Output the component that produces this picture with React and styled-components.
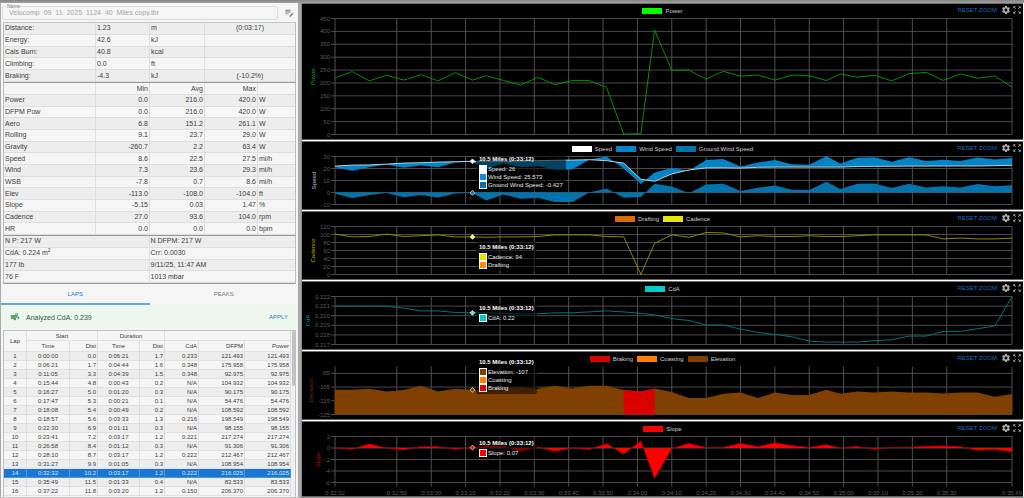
import React, { useLayoutEffect, useRef, useState } from "react";
import styled, { createGlobalStyle } from "styled-components";
import { MdAir, MdEditNote, MdSettings, MdZoomOutMap } from "react-icons/md";

const Global = createGlobalStyle`
  * { box-sizing: border-box; }
  body {
    margin: 0;
    background: #f5f5f5;
    font-family: "Liberation Sans", Arial, sans-serif;
    font-size: 7px;
    color: #3c3c3c;
  }
  button, input { font: inherit; margin: 0; }
`;

/* ---------- data ---------- */

const totals = [
  ["Distance:", "1.23", "m", "(0:03:17)"],
  ["Energy:", "42.6", "kJ", ""],
  ["Cals Burn:", "40.8", "kcal", ""],
  ["Climbing:", "0.0", "ft", ""],
  ["Braking:", "-4.3", "kJ", "(-10.2%)"],
];

const stats = [
  ["Power", "0.0", "216.0", "420.0", "W"],
  ["DFPM Pow", "0.0", "216.0", "420.0", "W"],
  ["Aero", "6.8", "151.2", "261.1", "W"],
  ["Rolling", "9.1", "23.7", "29.0", "W"],
  ["Gravity", "-260.7", "2.2", "63.4", "W"],
  ["Speed", "8.6", "22.5", "27.5", "mi/h"],
  ["Wind", "7.3", "23.6", "29.3", "mi/h"],
  ["WSB", "-7.8", "0.7", "8.6", "mi/h"],
  ["Elev", "-113.0", "-108.0", "-104.0", "ft"],
  ["Slope", "-5.15", "0.03", "1.47", "%"],
  ["Cadence", "27.0", "93.6", "104.0", "rpm"],
  ["HR", "0.0", "0.0", "0.0", "bpm"],
];

const laps = [
  ["1", "0:00:00", "0.0", "0:06:21", "1.7", "0.233", "121.493"],
  ["2", "0:06:21", "1.7", "0:04:44", "1.6", "0.348", "175.958"],
  ["3", "0:11:05", "3.3", "0:04:39", "1.5", "0.348", "92.975"],
  ["4", "0:15:44", "4.8", "0:00:43", "0.2", "N/A", "104.932"],
  ["5", "0:16:27", "5.0", "0:01:20", "0.3", "N/A", "90.175"],
  ["6", "0:17:47", "5.3", "0:00:21", "0.1", "N/A", "54.476"],
  ["7", "0:18:08", "5.4", "0:00:49", "0.2", "N/A", "108.592"],
  ["8", "0:18:57", "5.6", "0:03:33", "1.3", "0.216", "198.549"],
  ["9", "0:22:30", "6.9", "0:01:11", "0.3", "N/A", "98.155"],
  ["10", "0:23:41", "7.2", "0:03:17", "1.2", "0.221", "217.274"],
  ["11", "0:26:58", "8.4", "0:01:12", "0.3", "N/A", "91.306"],
  ["12", "0:28:10", "8.7", "0:03:17", "1.2", "0.222", "212.467"],
  ["13", "0:31:27", "9.9", "0:01:05", "0.3", "N/A", "108.954"],
  ["14", "0:32:32", "10.2", "0:03:17", "1.2", "0.222", "216.025"],
  ["15", "0:35:49", "11.5", "0:01:33", "0.4", "N/A", "83.533"],
  ["16", "0:37:22", "11.8", "0:03:20", "1.2", "0.150", "206.370"],
];

/* Seconds since the start of the lap at which a sample was taken. */
const times = [
  0, 5, 10, 15, 20, 25, 30, 35, 40, 44, 49, 54, 59, 64, 69, 74, 79, 84, 89, 93,
  98, 103, 108, 113, 118, 123, 128, 133, 138, 143, 147, 152, 157, 162, 167, 172,
  177, 182, 187, 192, 197,
];
const DURATION = 197;
const HOVER = 8;

const timeTicks = [
  [0, "0:32:32"], [18, "0:32:50"], [28, "0:33:00"], [38, "0:33:10"], [48, "0:33:20"],
  [58, "0:33:30"], [68, "0:33:40"], [78, "0:33:50"], [88, "0:34:00"], [98, "0:34:10"],
  [108, "0:34:20"], [118, "0:34:30"], [128, "0:34:40"], [138, "0:34:50"],
  [148, "0:35:00"], [158, "0:35:10"], [168, "0:35:20"], [178, "0:35:30"],
  [197, "0:35:49"],
];

const power = [
  219, 244, 208, 230, 211, 232, 208, 240, 211, 228, 210, 192, 222, 193, 209, 209,
  183, 1, 4, 405, 249, 250, 215, 245, 226, 231, 211, 231, 228, 209, 235, 222, 230,
  208, 236, 241, 210, 235, 218, 227, 184,
];
const speed = [
  22, 22.8, 23, 23.7, 24.5, 24.8, 25.3, 25.7, 26, 26, 26, 26.2, 26.5, 26.8, 27,
  27.3, 26.5, 24.5, 11, 9.3, 15.5, 18.8, 20.5, 20.6, 20.3, 21, 21.2, 21.2, 21.2,
  21.2, 21.2, 21.7, 21.8, 21.8, 22, 22, 22.1, 22.1, 22.1, 22.3, 22.7,
];
const groundWind = [
  -1, -4.6, -2, -0.4, -3.9, -2.2, -4.2, -0.8, -0.4, -6.6, -1.6, -5.2, -4.4, -7.8,
  -7.8, 0, 3.4, -4.4, -3.8, 7.3, 5, -0.7, 6.6, 7.3, 1.3, 4, 5.8, 2.3, 2, 9, 3,
  7.3, 7.6, 3.8, 7.3, 4.2, 5.2, 4.2, 7, 5.2, 6,
];
const wind = speed.map((v, i) => v + groundWind[i]);
const cadence = [
  101, 94, 95, 101, 95, 97, 99, 94, 94, 93, 94, 94, 95, 99, 99, 99, 95, 94, 0, 78,
  99, 93, 105, 104, 94, 97, 95, 95, 97, 95, 95, 97, 99, 99, 99, 99, 89, 91, 89, 89,
  91,
];
const cda = [
  0.221, 0.221, 0.221, 0.221, 0.22078, 0.2205, 0.2205, 0.22033, 0.2203, 0.2203,
  0.22025, 0.22018, 0.2202, 0.2203, 0.2203, 0.2204, 0.2205, 0.2204, 0.22025,
  0.22008, 0.2197, 0.2195, 0.21903, 0.21903, 0.2186, 0.21826, 0.21805, 0.2178,
  0.21735, 0.21725, 0.21725, 0.21725, 0.2174, 0.2175, 0.21787, 0.21787, 0.21836,
  0.21836, 0.21865, 0.21893, 0.222,
];
const elevation = [
  -107, -107, -106.2, -108.2, -107.2, -104, -108.2, -106.2, -107, -107, -105.5,
  -105.2, -106.2, -104, -106, -104, -104, -107.2, -108.2, -106, -108.7, -113, -113,
  -109.8, -109, -113, -109, -110.8, -110.8, -107, -109.8, -108.2, -109, -108.2,
  -109, -109, -109.6, -109, -109, -112, -110,
];
const slope = [
  0, -0.2, 0.7, 0, -0.3, 0.2, 0.2, -0.2, 0.07, 0.4, 0.3, -0.6, 0.15, -0.55, 0,
  -0.25, 0.75, -1.05, 1.2, -5.3, -0.1, 0.8, 0.05, 0.1, 0.8, 0.2, 0.9, 0.4, 0.1,
  0.55, 0, 0.25, -0.2, 0.1, 0.1, 0.3, 0.35, 0.2, -0.4, -0.25, -0.65,
];

const charts = [
  {
    title: "Power", color: "#00ad00", max: 450, min: 0, plot: 116, height: 121,
    ticks: ["450", "400", "350", "300", "250", "200", "150", "100", "50", "0"],
    legend: [["Power", "#00ff00"]],
    layers: [{ kind: "line", data: power, color: "#00a000" }],
  },
  {
    title: "Speed", color: "#c4c4c4", max: 30, min: -10, plot: 48, height: 53,
    ticks: ["30", "20", "10", "0", "-10"],
    legend: [["Speed", "#ffffff"], ["Wind Speed", "#0284c7"], ["Ground Wind Speed", "#0274ad"]],
    layers: [
      { kind: "area", data: groundWind, base: 0, color: "#0274ad" },
      { kind: "area", data: wind, baseData: speed, color: "#0284c7" },
      { kind: "line", data: speed, color: "#c9dbe6" },
    ],
    markers: [[speed, "#ffffff"], [groundWind, "#0274ad"]],
    tip: {
      top: 12,
      items: [["Speed: 26", "#ffffff"], ["Wind Speed: 25.573", "#1688d8"], ["Ground Wind Speed: -0.427", "#0a6fb0"]],
    },
  },
  {
    title: "Cadence", color: "#b3b300", max: 120, min: 0, plot: 48, height: 53,
    ticks: ["120", "100", "80", "60", "40", "20", "0"],
    legend: [["Drafting", "#d96c00"], ["Cadence", "#e6e600"]],
    layers: [{ kind: "line", data: cadence, color: "#989800" }],
    markers: [[cadence, "#ffff33"]],
    tip: { top: 30, items: [["Cadence: 94", "#e6e600"], ["Drafting", "#ff8c1a"]] },
  },
  {
    title: "CdA", color: "#009999", max: 0.222, min: 0.217, plot: 48, height: 53,
    ticks: ["0.222", "0.221", "0.220", "0.219", "0.218", "0.217"],
    legend: [["CdA", "#00cccc"]],
    layers: [{ kind: "line", data: cda, color: "#008080" }],
    markers: [[cda, "#66d9e6"]],
    tip: { top: 21, items: [["CdA: 0.22", "#00cccc"]] },
  },
  {
    title: "Elevation", color: "#663300", max: -90, min: -125, plot: 48, height: 53,
    ticks: ["-95", "-105", "-115", "-125"],
    legend: [["Braking", "#d90000"], ["Coasting", "#ff8000"], ["Elevation", "#804000"]],
    layers: [
      { kind: "area", data: elevation, base: -125, color: "#804000" },
      { kind: "area", data: elevation, base: -125, color: "#d90000", from: 17, to: 19 },
    ],
    markers: [[elevation, "#804000"]],
    tip: { top: 5, items: [["Elevation: -107", "#804000"], ["Coasting", "#ff8000"], ["Braking", "#e60000"]] },
  },
  {
    title: "Slope", color: "#c40000", max: 2, min: -6, plot: 46, height: 60, timeAxis: true,
    ticks: ["2", "0", "-2", "-4", "-6"],
    legend: [["Slope", "#ff0000"]],
    layers: [
      { kind: "area", data: slope, base: 0, color: "#ff0000" },
      { kind: "line", data: slope, color: "#a00000" },
    ],
    markers: [[slope, "#ff0000"]],
    tip: { top: 16, items: [["Slope: 0.07", "#ff0000"]] },
  },
];

/* ---------- page ---------- */

const Page = styled.div`
  display: flex;
  flex-direction: column;
  height: 100vh;
  overflow: hidden;
`;

const TopBar = styled.div`
  flex: none;
  height: 3px;
  background: linear-gradient(#858585, #a0a0a0);
`;

const Columns = styled.div`
  flex: 1;
  min-height: 0;
  display: grid;
  grid-template-columns: 301px 1fr;
`;

/* ---------- sidebar ---------- */

const Sidebar = styled.aside`
  display: flex;
  flex-direction: column;
  min-height: 0;
  overflow: hidden;
  border-left: 1px solid #aaa;
  border-right: 3px solid #a8a8a8;
  border-bottom: 1px solid #c4c4c4;
`;

const NameRow = styled.div`
  flex: none;
  display: flex;
  align-items: center;
  gap: 6px;
  height: 19px;
  padding: 0 3px 0 1px;
`;

const NameField = styled.div`
  position: relative;
  flex: 1;

  label {
    position: absolute;
    top: -3px;
    left: 4px;
    padding: 0 1px;
    background: #f5f5f5;
    color: #777;
    font-size: 5px;
    line-height: 6px;
  }
  input {
    display: block;
    width: 100%;
    height: 14px;
    padding: 0 6px;
    border: 1px solid #dcdcdc;
    border-radius: 2px;
    background: transparent;
    color: #a6a6a6;
    line-height: 12px;
  }
`;

const IconButton = styled.button`
  display: flex;
  padding: 0;
  border: 0;
  background: none;
  color: ${(p) => p.$color};
  font-size: ${(p) => p.$size}px;
`;

const StatTable = styled.table`
  flex: none;
  width: 293px;
  height: ${(p) => p.$height}px;
  margin-left: 2px;
  table-layout: fixed;
  border-spacing: 0;
  border: solid #bdbdbd;
  border-width: ${(p) => (p.$open ? "1px 1px 0" : "1px 1px 1px")};
  border-top-color: ${(p) => (p.$strong ? "#999" : "#c4c4c4")};
  border-bottom-color: #999;
  line-height: 8px;

  th, td {
    padding: 0 1px;
    border-right: 1px solid #dedede;
    border-bottom: 1px solid #dedede;
    font-weight: 400;
    text-align: left;
    white-space: nowrap;
  }
  th:last-child, td:last-child { border-right: 0; }
  thead th { height: 12px; }
  tbody tr:nth-child(odd) { background: #ededed; }
  sup { font-size: 5px; line-height: 0; }
`;

const Num = styled.td`
  && { text-align: ${(p) => p.$align || "right"}; }
`;

const Tabs = styled.div`
  flex: none;
  display: grid;
  grid-template-columns: 1fr 1fr;
  height: 21px;
`;

const Tab = styled.button`
  padding: 0;
  border: 0;
  border-bottom: 2px solid ${(p) => (p.$active ? "#64a6e2" : "transparent")};
  background: none;
  color: ${(p) => (p.$active ? "#1976d2" : "#777")};
  font-size: 6px;
`;

const Notice = styled.div`
  flex: none;
  display: flex;
  align-items: center;
  gap: 6px;
  height: 24px;
  margin-bottom: 1px;
  padding: 0 10px 0 9px;
  background: #edf7ed;
  color: #2f5733;

  svg { font-size: 10px; color: #2e8b34; }
  span { flex: 1; }
`;

const TextButton = styled.button`
  padding: 0;
  border: 0;
  background: none;
  color: ${(p) => p.$color};
  font-size: 6px;
  line-height: 8px;
`;

const LapPane = styled.div`
  flex: 1;
  min-height: 0;
  display: flex;
  width: 293px;
  margin-left: 2px;
  overflow: hidden;
  border: 1px solid #c0c0c0;
  border-bottom: 0;
`;

const LapTable = styled.table`
  flex: none;
  align-self: flex-start;
  width: 287px;
  table-layout: fixed;
  border-spacing: 0;
  font-size: 6px;
  line-height: 8px;

  th, td {
    height: 9px;
    padding: 0 1px;
    border-right: 1px solid #dedede;
    border-bottom: 1px solid #e0e0e0;
    font-weight: 400;
    text-align: center;
  }
  th { height: 10px; }
  thead tr:last-child th { height: 11px; }
  tbody tr:nth-child(odd) { background: #ededed; }
`;

const LapRow = styled.tr`
  && { ${(p) => p.$selected && "background: #1976d2; color: #d7e8f8;"} }
  && td { ${(p) => p.$selected && "border-color: #4c94db;"} }
  td:nth-child(3), td:nth-child(n + 5) { text-align: right; }
`;

const RightHead = styled.th`
  && { text-align: right; }
`;

const ScrollTrack = styled.div`
  flex: 1;
  display: flex;
  justify-content: flex-end;
  background: #f0f0f0;
`;

const ScrollThumb = styled.div`
  width: 3px;
  height: 55px;
  border-radius: 2px;
  background: #c1c1c1;
`;

function SidePanel() {
  return (
    <Sidebar>
      <NameRow>
        <NameField>
          <input id="ride-name" readOnly value="Velocomp_09_11_2025_1124_40_Miles copy.ibr" />
          <label htmlFor="ride-name">Name</label>
        </NameField>
        <IconButton $color="#757575" $size={11} aria-label="Edit notes">
          <MdEditNote />
        </IconButton>
      </NameRow>

      <StatTable $height={60} $open>
        <colgroup>
          <col width="92" /><col width="54" /><col width="55" /><col />
        </colgroup>
        <tbody>
          {totals.map(([name, value, unit, note]) => (
            <tr key={name}>
              <th scope="row">{name}</th>
              <td>{value}</td>
              <td>{unit}</td>
              <Num $align="center">{note}</Num>
            </tr>
          ))}
        </tbody>
      </StatTable>

      <StatTable $height={153} $open $strong>
        <colgroup>
          <col width="92" /><col width="54" /><col width="55" /><col width="53" /><col />
        </colgroup>
        <thead>
          <tr>
            <td />
            <Num as="th">Min</Num>
            <Num as="th">Avg</Num>
            <Num as="th">Max</Num>
            <td />
          </tr>
        </thead>
        <tbody>
          {stats.map(([name, min, avg, max, unit]) => (
            <tr key={name}>
              <th scope="row">{name}</th>
              <Num>{min}</Num>
              <Num>{avg}</Num>
              <Num>{max}</Num>
              <td>{unit}</td>
            </tr>
          ))}
        </tbody>
      </StatTable>

      <StatTable $height={49} $strong>
        <tbody>
          <tr><td>N P: 217 W</td><td>N DFPM: 217 W</td></tr>
          <tr><td>CdA: 0.224 m<sup>2</sup></td><td>Crr: 0.0030</td></tr>
          <tr><td>177 lb</td><td>9/11/25, 11:47 AM</td></tr>
          <tr><td>76 F</td><td>1013 mbar</td></tr>
        </tbody>
      </StatTable>

      <Tabs role="tablist">
        <Tab role="tab" aria-selected="true" $active>LAPS</Tab>
        <Tab role="tab" aria-selected="false">PEAKS</Tab>
      </Tabs>

      <Notice>
        <MdAir />
        <span>Analyzed CdA: 0.239</span>
        <TextButton $color="#1976d2">APPLY</TextButton>
      </Notice>

      <LapPane>
        <LapTable>
          <colgroup>
            <col width="23" /><col width="43" /><col width="28" /><col width="42" />
            <col width="25" /><col width="34" /><col width="46" /><col width="46" />
          </colgroup>
          <thead>
            <tr>
              <th rowSpan={2}>Lap</th>
              <th colSpan={2}>Start</th>
              <th colSpan={2}>Duration</th>
              <td colSpan={3} />
            </tr>
            <tr>
              <th>Time</th>
              <RightHead>Dist</RightHead>
              <th>Time</th>
              <RightHead>Dist</RightHead>
              <RightHead>CdA</RightHead>
              <RightHead>DFPM</RightHead>
              <RightHead>Power</RightHead>
            </tr>
          </thead>
          <tbody>
            {laps.map((lap) => (
              <LapRow key={lap[0]} $selected={lap[0] === "14"}>
                {lap.map((value, i) => <td key={i}>{value}</td>)}
                <td>{lap[6]}</td>
              </LapRow>
            ))}
          </tbody>
        </LapTable>
        <ScrollTrack><ScrollThumb /></ScrollTrack>
      </LapPane>
    </Sidebar>
  );
}

/* ---------- charts ---------- */

const ChartColumn = styled.main`
  display: flex;
  flex-direction: column;
  gap: 1px;
  min-width: 0;
  min-height: 0;
  overflow: hidden;
  padding-right: 1px;
  border-left: 1px solid #8c8c8c;
  border-bottom: 1px solid #999;
  background: #fff;
`;

const ChartPanel = styled.section`
  flex: none;
  position: relative;
  border-top: 1px solid #707070;
  border-bottom: 1px solid #606060;
  background: #000;

  &:last-child { flex: 1 0 auto; }
`;

const ChartHead = styled.header`
  display: grid;
  align-items: center;
  height: 14px;
`;

const Legend = styled.ul`
  grid-area: 1 / 1;
  justify-self: center;
  display: flex;
  gap: 4px;
  margin: 0;
  padding: 0;
  list-style: none;
`;

const LegendItem = styled.li`
  display: flex;
  align-items: center;
  gap: 3px;
  color: #cfcfcf;
  font-size: 6px;
  line-height: 8px;

  &::before {
    content: "";
    width: 20px;
    height: 6px;
    background: ${(p) => p.$color};
  }
`;

const ChartActions = styled.div`
  grid-area: 1 / 1;
  justify-self: end;
  display: flex;
  align-items: center;
  gap: 1px;
  padding: 0 1px 2px 0;

  button:first-child { margin-right: 3px; }
`;

const Plot = styled.svg`
  display: block;
  width: 100%;
  height: ${(p) => p.$height}px;
  overflow: visible;
  font-size: 6px;
`;

const Tip = styled.div`
  position: absolute;
  padding: 1px 3px 2px;
  border-radius: 2px;
  background: rgba(0, 0, 0, 0.5);
  color: #e6e6e6;
  font-size: 6px;
  line-height: 8px;
  white-space: nowrap;

  strong { display: block; margin-bottom: 2px; color: #fff; }
`;

const TipItem = styled.div`
  display: flex;
  align-items: center;
  gap: 1px;

  &::before {
    content: "";
    width: 6px;
    height: 6px;
    border: 1px solid #fff;
    background: ${(p) => p.$color};
  }
`;

function useWidth() {
  const ref = useRef(null);
  const [width, setWidth] = useState(0);
  useLayoutEffect(() => {
    const measure = () => setWidth(ref.current.clientWidth);
    measure();
    const observer = new ResizeObserver(measure);
    observer.observe(ref.current);
    return () => observer.disconnect();
  }, []);
  return [ref, width];
}

const PLOT_LEFT = 33;
const PLOT_RIGHT = 11;
const PLOT_TOP = 0.5;

/* Approximate width of a tick label, digit by digit. */
const labelWidth = (text) =>
  [...text].reduce((sum, ch) => sum + (ch === "-" || ch === "." ? 2 : 3.3), 0);

function Chart({ chart }) {
  const [ref, width] = useWidth();
  const right = width - PLOT_RIGHT;
  const bottom = PLOT_TOP + chart.plot;
  const x = (t) => PLOT_LEFT + (t / DURATION) * (right - PLOT_LEFT);
  const y = (v) => PLOT_TOP + ((chart.max - v) / (chart.max - chart.min)) * chart.plot;
  const widest = Math.max(...chart.ticks.map(labelWidth));
  const titleX = PLOT_LEFT - 5 - widest - 7;
  const titleY = PLOT_TOP + chart.plot / 2;

  const point = (data) => (i) => `${x(times[i]).toFixed(1)},${y(data[i]).toFixed(1)}`;

  const drawLayer = (layer, key) => {
    const from = layer.from ?? 0;
    const to = layer.to ?? times.length - 1;
    const indexes = times.map((_, i) => i).filter((i) => i >= from && i <= to);
    const top = indexes.map(point(layer.data));
    if (layer.kind === "line") {
      return <polyline key={key} points={top.join(" ")} fill="none" stroke={layer.color} strokeWidth="0.9" />;
    }
    const base = layer.baseData
      ? [...indexes].reverse().map(point(layer.baseData))
      : [`${x(times[to])},${y(layer.base)}`, `${x(times[from])},${y(layer.base)}`];
    return <polygon key={key} points={[...top, ...base].join(" ")} fill={layer.color} />;
  };

  return (
    <ChartPanel ref={ref}>
      <ChartHead>
        <Legend>
          {chart.legend.map(([name, color]) => (
            <LegendItem key={name} $color={color}>{name}</LegendItem>
          ))}
        </Legend>
        <ChartActions>
          <TextButton $color="#1769bb">RESET ZOOM</TextButton>
          <IconButton $color="#b0b0b0" $size={10} aria-label="Chart settings"><MdSettings /></IconButton>
          <IconButton $color="#a0a0a0" $size={10} aria-label="Expand chart"><MdZoomOutMap /></IconButton>
        </ChartActions>
      </ChartHead>

      <Plot $height={chart.height} role="img" aria-label={chart.title}>
        {width > 0 && (
          <>
            <g stroke="#4a4a4a">
              {chart.ticks.map((t) => (
                <line key={t} x1={PLOT_LEFT - 4} x2={right} y1={y(+t)} y2={y(+t)} />
              ))}
            </g>
            <g stroke="#505050">
              {timeTicks.map(([t]) => (
                <line key={t} x1={x(t)} x2={x(t)} y1={PLOT_TOP} y2={bottom + (chart.timeAxis ? 4 : 0)} />
              ))}
            </g>
            <g fill="#5c5c5c" textAnchor="end">
              {chart.ticks.map((t) => (
                <text key={t} x={PLOT_LEFT - 5} y={y(+t) + 2}>{t}</text>
              ))}
            </g>
            <text
              transform={`translate(${titleX + 2} ${titleY}) rotate(-90)`}
              textAnchor="middle"
              fill={chart.color}
            >
              {chart.title}
            </text>
            {chart.timeAxis && (
              <g fill="#5c5c5c" textAnchor="middle">
                {timeTicks.map(([t, label]) => (
                  <text key={t} x={x(t)} y={bottom + 12}>{label}</text>
                ))}
              </g>
            )}
            {chart.layers.map(drawLayer)}
            {chart.markers?.map(([data, color], i) => (
              <path
                key={i}
                d="M0 -2.4 L2.4 0 L0 2.4 L-2.4 0 Z"
                transform={`translate(${x(times[HOVER])} ${y(data[HOVER])})`}
                fill={color}
                stroke="#e8e8e8"
                strokeWidth="0.8"
              />
            ))}
          </>
        )}
      </Plot>

      {chart.tip && width > 0 && (
        <Tip style={{ top: chart.tip.top, left: Math.round(x(times[HOVER])) + 4 }}>
          <strong>10.5 Miles (0:33:12)</strong>
          {chart.tip.items.map(([text, color]) => (
            <TipItem key={text} $color={color}>{text}</TipItem>
          ))}
        </Tip>
      )}
    </ChartPanel>
  );
}

export default function App() {
  return (
    <Page>
      <Global />
      <TopBar />
      <Columns>
        <SidePanel />
        <ChartColumn>
          {charts.map((chart) => <Chart key={chart.title} chart={chart} />)}
        </ChartColumn>
      </Columns>
    </Page>
  );
}
